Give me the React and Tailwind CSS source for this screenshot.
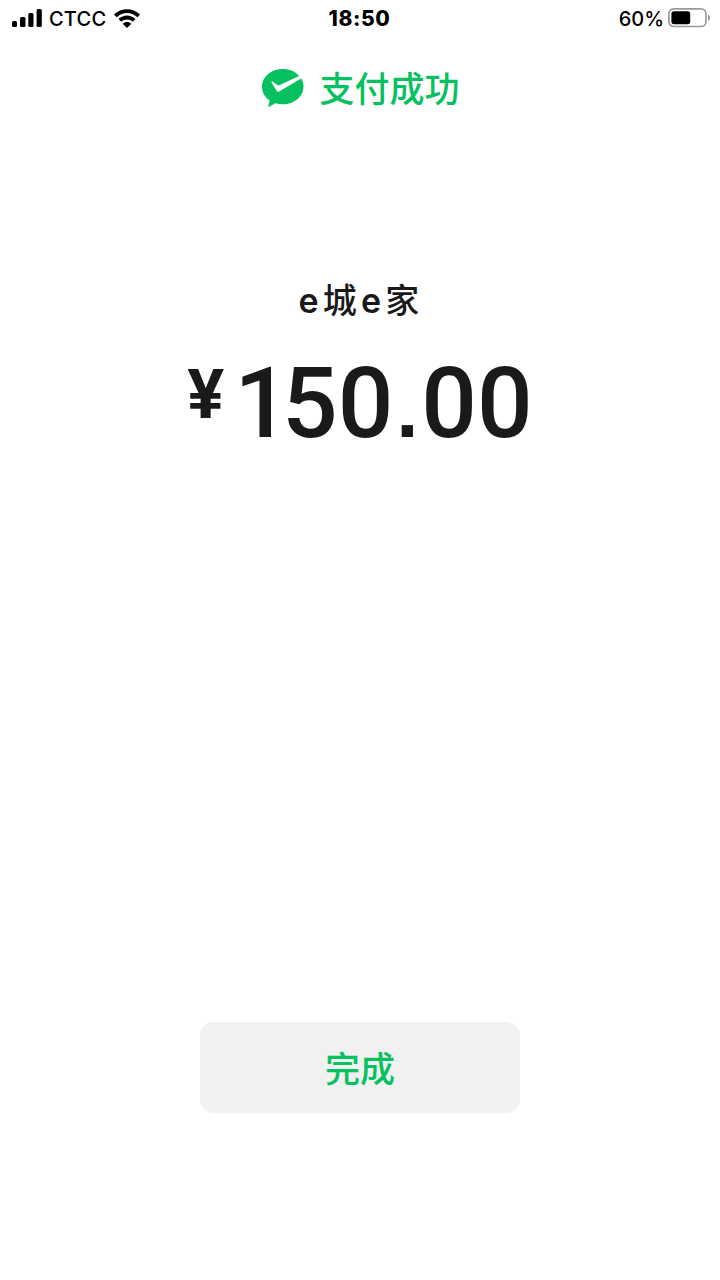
const SignalIcon = () => (
  <svg className="w-[30px] h-[18px]" viewBox="0 0 30 18">
    <rect x="0" y="12" width="5" height="6" rx="1.5" />
    <rect x="8" y="8" width="5.5" height="10" rx="1.5" />
    <rect x="16.3" y="4" width="5.2" height="14" rx="1.5" />
    <rect x="24.6" y="0" width="5.2" height="18" rx="1.5" />
  </svg>
)

const WifiIcon = () => (
  <svg className="w-[26px] h-[19px]" viewBox="0 0 26 19">
    <path d="M0 5.6C7.4-1.7 18.6-1.7 26 5.6L23.4 8.3C17.4 2.5 8.6 2.5 2.6 8.3Z" />
    <path d="M4.5 10.1C9.4 5.4 16.6 5.4 21.5 10.1L18.8 12.8C15.5 9.6 10.5 9.6 7.2 12.8Z" />
    <path d="M8.7 14.7C11.2 12.4 14.8 12.4 17.3 14.7L13 19Z" />
  </svg>
)

const BatteryIcon = () => (
  <svg className="w-[42px] h-[20px]" viewBox="0 0 42 20">
    <rect x="0.9" y="0.9" width="37" height="17.6" rx="4.8" fill="none" stroke="#9a9a9a" strokeWidth="1.7" />
    <rect x="3.4" y="3.2" width="18.8" height="13" rx="2.6" />
    <path d="M40 6.5C42.6 7.3 42.6 12 40 12.8Z" fill="#9a9a9a" />
  </svg>
)

const PayLogo = () => (
  <svg className="mt-[2px] w-[42px] h-[38px]" viewBox="0 0 42 38">
    <path
      fill="#07c160"
      d="M20.8 0C9.3 0 0 7.8 0 17.7C0 23.4 3 28.4 7.7 31.6L6.3 36.6C6.1 37.5 6.8 38 7.6 37.5L13.5 34.2C15.8 34.9 18.2 35.3 20.8 35.3C32.2 35.3 41.5 27.5 41.5 17.7C41.5 14.7 40.7 11.9 39.2 9.5L17.1 22.4C16.1 22.9 15.2 22.7 14.6 21.7L9.6 13.5C9.3 12.8 10 12.1 10.7 12.6L15.3 15.9C16.1 16.4 16.9 16.5 17.8 16.1L37.2 6.9C33.4 2.7 27.5 0 20.8 0Z"
    />
  </svg>
)

const StatusBar = () => (
  <header className="grid h-[36px] grid-cols-3 items-center pl-[12px] pr-[10px] font-['Inter','Liberation_Sans',sans-serif] text-[20px] text-black">
    <div className="flex items-center">
      <SignalIcon />
      <span className="ml-[7px] mr-[8px] pt-[1px] font-medium tracking-[0.2px]">CTCC</span>
      <WifiIcon />
    </div>
    <div className="pt-[2px] pr-[3px] text-center text-[21px] font-extrabold tracking-[0.6px]">18:50</div>
    <div className="flex items-center justify-end gap-1">
      <span className="pt-[1px] font-medium">60%</span>
      <BatteryIcon />
    </div>
  </header>
)

const App = () => {
  return (
    <div className="flex h-screen flex-col bg-white font-['Noto_Sans_CJK_SC',sans-serif]">
      <StatusBar />
      <div className="mt-[26px] flex h-[50px] items-center justify-center gap-[15px] pl-[2px]">
        <PayLogo />
        <h1 className="text-[35px] leading-[50px] font-medium text-[#07c160]">支付成功</h1>
      </div>
      <main className="mt-[164px] flex flex-col items-center text-[#1a1a1a]">
        <p className="pl-[2px] font-['Inter','Noto_Sans_CJK_SC',sans-serif] text-[34px] leading-[50px] tracking-[4.2px]">
          <span className="font-semibold">e</span>
          <span className="font-medium">城</span>
          <span className="font-semibold">e</span>
          <span className="font-medium">家</span>
        </p>
        <div className="mt-[28px] flex items-start font-['Roboto',sans-serif]">
          <span className="text-[69px] leading-[82px] font-bold">¥</span>
          <span className="ml-[10px] text-[98px] leading-[100px] font-medium">
            <span className="tracking-[-8px]">1</span>50
            <span className="inline-block w-[28px] text-center font-['Liberation_Sans',sans-serif] text-[80px] leading-none font-bold">.</span>
            00
          </span>
        </div>
      </main>
      <button className="mx-auto mt-auto mb-[167px] h-[91px] w-[320px] rounded-[14px] bg-[#f1f1f1] pb-[2px] text-[35px] leading-[48px] font-medium text-[#07c160]">
        完成
      </button>
    </div>
  )
}

export default App
